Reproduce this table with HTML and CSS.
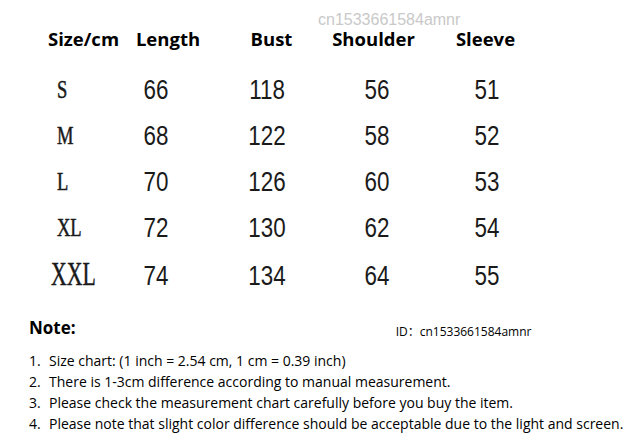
FILE: index.html
```html
<!DOCTYPE html>
<html>
<head>
<meta charset="utf-8">
<link rel="stylesheet" href="styles.css">
</head>
<body>
<div class="page">
  <div class="watermark">cn1533661584amnr</div>
  <div class="head-row">
    <div class="hd">Size/cm</div>
    <div class="hd">Length</div>
    <div class="hd">Bust</div>
    <div class="hd">Shoulder</div>
    <div class="hd">Sleeve</div>
  </div>
  <div class="data">
    <div class="row"><div class="sz"><span class="lab">S</span></div><div class="num">66</div><div class="num">118</div><div class="num">56</div><div class="num">51</div></div>
    <div class="row"><div class="sz"><span class="lab">M</span></div><div class="num">68</div><div class="num">122</div><div class="num">58</div><div class="num">52</div></div>
    <div class="row"><div class="sz"><span class="lab">L</span></div><div class="num">70</div><div class="num">126</div><div class="num">60</div><div class="num">53</div></div>
    <div class="row"><div class="sz"><span class="lab">XL</span></div><div class="num">72</div><div class="num">130</div><div class="num">62</div><div class="num">54</div></div>
    <div class="row"><div class="sz"><span class="lab big">XXL</span></div><div class="num">74</div><div class="num">134</div><div class="num">64</div><div class="num">55</div></div>
  </div>
  <div class="note-row">
    <div class="note-title">Note:</div>
    <div class="note-id">ID：cn1533661584amnr</div>
  </div>
  <ol class="notes">
    <li>Size chart: (1 inch = 2.54 cm, 1 cm = 0.39 inch)</li>
    <li>There is 1-3cm difference according to manual measurement.</li>
    <li>Please check the measurement chart carefully before you buy the item.</li>
    <li>Please note that slight color difference should be acceptable due to the light and screen.</li>
  </ol>
</div>
</body>
</html>
```

FILE: styles.css
```css
html, body {
  margin: 0;
  padding: 0;
  background: #ffffff;
}

.page {
  position: relative;
  width: 627px;
  height: 443px;
  overflow: hidden;
  color: #000;
  font-family: "Open Sans", "Noto Sans", sans-serif;
}

.watermark {
  position: absolute;
  left: 318px;
  top: 10px;
  font-family: "Liberation Sans", Arial, sans-serif;
  font-size: 16px;
  line-height: 20px;
  color: #c9c9c9;
}

.head-row {
  display: grid;
  grid-template-columns: 79px 90px 117px 87px 137px;
  padding: 27px 0 0 44px;
  height: 24px;
}

.hd {
  text-align: center;
  font-weight: 700;
  font-size: 18.5px;
  line-height: 24px;
  white-space: nowrap;
}

.data {
  margin-top: 16px;
  display: flex;
  flex-direction: column;
}

.row {
  display: grid;
  grid-template-columns: 126px 60px 162px 58px 162px;
  height: 46px;
  align-items: center;
}

.sz {
  padding-left: 57px;
  font-family: "Liberation Serif", "Times New Roman", serif;
  font-weight: 400;
  font-size: 25px;
  line-height: 46px;
  color: #1a1a1a;
  -webkit-text-stroke: 0.5px #1a1a1a;
}

.lab {
  display: inline-block;
  transform: scaleX(0.74);
  transform-origin: left center;
}

.lab.big {
  font-size: 34px;
  transform: scaleX(0.64);
  margin-left: -6px;
}

.num {
  text-align: center;
  font-family: "Liberation Sans", Arial, sans-serif;
  font-size: 28px;
  line-height: 46px;
  color: #1a1a1a;
  transform: scaleX(0.8);
}

.note-row {
  display: flex;
  align-items: baseline;
  padding-left: 29px;
  margin-top: 19px;
}

.note-title {
  font-weight: 700;
  font-size: 17px;
  line-height: 24px;
}

.note-id {
  margin-left: 320px;
  font-size: 12px;
  font-family: "Open Sans", "Noto Sans CJK SC", sans-serif;
  position: relative;
  top: 2px;
}

.notes {
  list-style: none;
  counter-reset: n;
  margin: 10px 0 0 0;
  padding-left: 29px;
  font-size: 14px;
  line-height: 21px;
}

.notes li {
  counter-increment: n;
  white-space: nowrap;
}

.notes li::before {
  content: counter(n) ".";
  display: inline-block;
  width: 20px;
}
```
